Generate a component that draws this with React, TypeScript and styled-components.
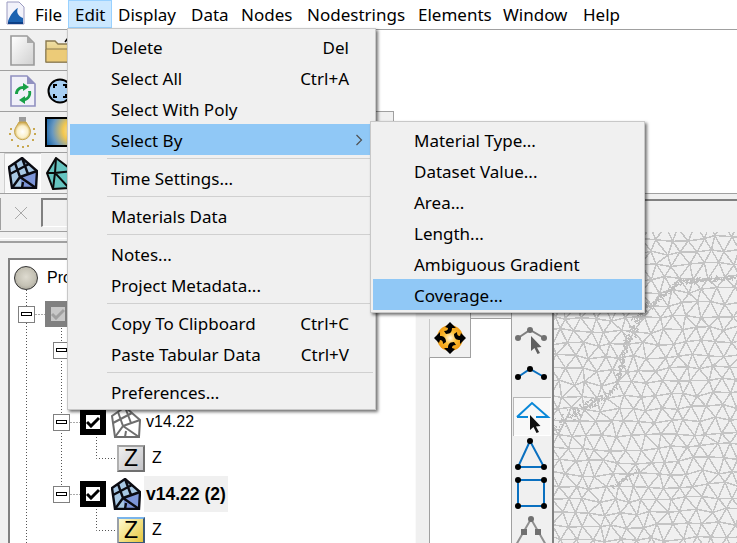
import React, { useMemo } from "react";
import styled, { createGlobalStyle } from "styled-components";

const Global = createGlobalStyle`
  html, body { margin: 0; padding: 0; background: #f0f0f0; }
  body { font-family: "Noto Sans", "Open Sans", sans-serif; color: #000; }
`;

const Page = styled.div`
  position: relative;
  width: 737px;
  height: 543px;
  overflow: hidden;
  background: #f0f0f0;
  display: flex;
  flex-direction: column;
`;

const MenuBar = styled.div`
  height: 29px;
  flex: none;
  background: #fff;
  position: relative;
  font-size: 17px;
`;
const AppIcon = styled.svg`
  position: absolute;
  left: 5px;
  top: 1px;
`;
const MenuLabel = styled.span<{ $x: number; $active?: boolean }>`
  position: absolute;
  left: ${(p) => p.$x}px;
  top: 0;
  height: 28px;
  line-height: 30px;
  white-space: nowrap;
  ${(p) =>
    p.$active
      ? `background:#cce8ff; box-shadow: inset 0 0 0 1px #99d1ff; padding: 0 7px; height: 28px;`
      : ""}
`;

const TopZone = styled.div`
  flex: none;
  background: #fff;
  border-top: 1px solid #a0a0a0;
  border-bottom: 1px solid #a0a0a0;
  display: flex;
  flex-direction: column;
  align-items: flex-start;
`;
const ToolRow = styled.div<{ $w: number; $edge?: boolean }>`
  width: ${(p) => p.$w}px;
  height: 40px;
  box-sizing: border-box;
  background: #f0f0f0;
  padding-left: 4px;
  display: flex;
  ${(p) => (p.$edge ? "border-right: 1px solid #a0a0a0;" : "")}
  & + & {
    height: 41px;
    border-top: 1px solid #a0a0a0;
  }
`;
const ToolCell = styled.div<{ $sel?: boolean }>`
  width: 37px;
  height: 100%;
  flex: none;
  display: flex;
  align-items: center;
  justify-content: center;
  box-sizing: border-box;
  ${(p) => (p.$sel ? "background:#f9f9f9; box-shadow: inset 1px 1px 0 #cfcfcf, inset -1px -1px 0 #fff;" : "")}
`;

const InputBar = styled.div`
  flex: none;
  height: 38px;
  display: flex;
`;
const InputLeft = styled.div`
  width: 376px;
  flex: none;
  box-sizing: border-box;
  height: 38px;
  border-bottom: 1px solid #a0a0a0;
  padding: 4px 0 0 0;
  display: flex;
  align-items: flex-start;
`;
const Handle = styled.div`
  width: 1px;
  height: 32px;
  background: #a0a0a0;
`;
const XBtn = styled.div`
  width: 40px;
  height: 29px;
  display: flex;
  align-items: center;
  justify-content: center;
`;
const FakeInput = styled.div`
  width: 330px;
  height: 29px;
  box-sizing: border-box;
  border-top: 2px solid #808080;
  border-left: 2px solid #808080;
  border-bottom: 1px solid #fff;
  background: #f0f0f0;
`;
const InputRight = styled.div`
  flex: 1;
  margin-top: 5px;
  border-top: 2px solid #808080;
`;

const Workspace = styled.div`
  flex: 1;
  min-height: 0;
  display: flex;
`;
const TreeArea = styled.div`
  width: 415px;
  flex: none;
  display: flex;
  flex-direction: column;
`;
const TreeRule = styled.div`
  margin-top: 6px;
  height: 2px;
  border-top: 1px solid #fff;
  border-bottom: 2px solid #a0a0a0;
  flex: none;
`;
const TreeFrame = styled.div`
  margin: 15px 0 0 8px;
  flex: 1;
  position: relative;
  background: #fff;
  border-top: 2px solid #808080;
  border-left: 2px solid #808080;
  overflow: hidden;
`;
const TreeLines = styled.svg`
  position: absolute;
  left: 0;
  top: 0;
`;
const TreeRow = styled.div<{ $indent: number }>`
  position: relative;
  height: 36px;
  padding-left: ${(p) => p.$indent}px;
  display: flex;
  align-items: center;
  font-family: "Liberation Sans", Arial, sans-serif;
  font-size: 16px;
`;
const Expander = styled.div`
  width: 17px;
  height: 17px;
  box-sizing: border-box;
  border: 1px solid #808080;
  background: #fff;
  margin-right: 10px;
  flex: none;
  display: flex;
  align-items: center;
  justify-content: center;
  &::after {
    content: "";
    width: 11px;
    height: 4px;
    box-sizing: border-box;
    border: 1px solid #000;
    background: #fff;
  }
`;
const CheckBox = styled.div<{ $off?: boolean }>`
  width: 26px;
  height: 26px;
  box-sizing: border-box;
  border: 6px solid ${(p) => (p.$off ? "#808080" : "#000")};
  background: ${(p) => (p.$off ? "#c8c8c8" : "#fff")};
  flex: none;
  display: flex;
  align-items: center;
  justify-content: center;
  margin-right: 5px;
`;
const NodeLabel = styled.span<{ $bold?: boolean }>`
  margin-left: 5px;
  white-space: nowrap;
  ${(p) =>
    p.$bold
      ? `font-weight:700; font-size:17.5px; background:#f0f0f0; height:36px; line-height:36px; padding:0 2px 0 2px; margin-left:3px; width:80px;`
      : ""}
`;
const Ball = styled.div`
  width: 24px;
  height: 24px;
  border-radius: 50%;
  box-sizing: border-box;
  border: 1px solid #333;
  background: radial-gradient(circle at 50% 45%, #dedbd0 0%, #c4c1b4 55%, #8f8c82 100%);
  margin-right: 9px;
  flex: none;
`;
const ZBox = styled.div<{ $active?: boolean }>`
  width: 28px;
  height: 27px;
  box-sizing: border-box;
  flex: none;
  display: flex;
  align-items: center;
  justify-content: center;
  font-size: 23px;
  line-height: 22px;
  font-family: "Liberation Sans", Arial, sans-serif;
  border: 2px solid;
  border-color: ${(p) =>
    p.$active ? "#7ab4ea #3c5a78 #3c5a78 #9aa0a8" : "#a0a0a0 #707070 #707070 #b0b0b0"};
  background: ${(p) =>
    p.$active ? "linear-gradient(135deg,#fffbd0,#e6c63c)" : "linear-gradient(135deg,#f0f0f0,#c4c4c8)"};
`;
const ZText = styled.span`
  margin-left: 7px;
`;

const MidArea = styled.div`
  width: 96px;
  flex: none;
  box-sizing: border-box;
  padding-left: 13px;
  border-left: 1px solid #fafafa;
  display: flex;
  flex-direction: column;
`;
const UpperTabs = styled.div`
  height: 86px;
  flex: none;
  margin-left: 41px;
  border-left: 1px solid #a0a0a0;
  border-bottom: 1px solid #a0a0a0;
`;
const ActiveRow = styled.div`
  display: flex;
  background: #fff;
  height: 39px;
  flex: none;
`;
const ActiveTab = styled.div`
  width: 42px;
  height: 39px;
  box-sizing: border-box;
  background: #f0f0f0;
  border-right: 1px solid #a0a0a0;
  border-left: 1px solid #c8c8c8;
  border-bottom: 1px solid #a0a0a0;
  display: flex;
  align-items: center;
  justify-content: center;
`;
const TabBody = styled.div`
  flex: 1;
  background: #fff;
  border-left: 1px solid #a0a0a0;
`;

const ToolColumn = styled.div`
  width: 41px;
  flex: none;
  box-sizing: border-box;
  border-left: 1px solid #a0a0a0;
  padding-top: 87px;
  display: flex;
  flex-direction: column;
  align-items: stretch;
`;
const ColumnBtn = styled.div<{ $sel?: boolean }>`
  height: 39px;
  flex: none;
  ${(p) =>
    p.$sel
      ? "background:#f8f8f8; box-shadow: inset 1px 1px 0 #b8b8b8, inset -1px -1px 0 #fff; margin: 0 1px;"
      : ""}
  svg { display: block; }
`;
const MeshView = styled.div`
  flex: 1;
  box-sizing: border-box;
  border-left: 2px solid #808080;
  background: #f0f0f0;
  overflow: hidden;
`;

const Menu = styled.div<{ $x: number; $y: number; $w: number }>`
  position: absolute;
  left: ${(p) => p.$x}px;
  top: ${(p) => p.$y}px;
  width: ${(p) => p.$w}px;
  box-sizing: border-box;
  padding: 2px;
  border: 1px solid #c8c8c8;
  background: #f0f0f0;
  box-shadow: 2px 2px 3px rgba(0, 0, 0, 0.55);
  font-size: 17px;
  z-index: 5;
`;
const Item = styled.div<{ $hot?: boolean }>`
  position: relative;
  height: 31px;
  line-height: 34px;
  padding: 0 24px 0 41px;
  display: flex;
  justify-content: space-between;
  white-space: nowrap;
  background: ${(p) => (p.$hot ? "#90c8f6" : "transparent")};
`;
const Sep = styled.div`
  height: 1px;
  margin: 3px 0 3px 37px;
  background: #d0d0d0;
`;
const Chevron = styled.svg`
  position: absolute;
  right: 10px;
  top: 10px;
`;

function seeded(s: number) {
  let x = s;
  return () => {
    x = (x * 16807) % 2147483647;
    return x / 2147483647;
  };
}

function buildMesh() {
  const r = seeded(4711);
  const rows = 27;
  const cols = 15;
  const pts: [number, number][][] = [];
  for (let j = 0; j < rows; j++) {
    const row: [number, number][] = [];
    for (let i = 0; i < cols; i++) {
      const bx = -10 + i * 15 + (j % 2 ? 7.5 : 0);
      const by = -6 + j * 13;
      const x = bx + 2 * Math.sin(by / 37) + (r() - 0.5) * 6;
      const y = by + 2 * Math.sin(bx / 41) + (r() - 0.5) * 5;
      row.push([x, y]);
    }
    pts.push(row);
  }
  let d = "";
  const seg = (a: [number, number], b: [number, number]) => {
    d += `M${a[0].toFixed(1)} ${a[1].toFixed(1)}L${b[0].toFixed(1)} ${b[1].toFixed(1)}`;
  };
  for (let j = 0; j < rows; j++) {
    for (let i = 0; i < cols; i++) {
      if (i + 1 < cols) seg(pts[j][i], pts[j][i + 1]);
      if (j + 1 < rows) {
        seg(pts[j][i], pts[j + 1][i]);
        const k = j % 2 ? i + 1 : i - 1;
        if (k >= 0 && k < cols) seg(pts[j][i], pts[j + 1][k]);
      }
    }
  }
  const river: [number, number, number][] = [
    [184, 46, 1.5], [150, 48, 2], [124, 50, 2.5], [107, 65, 2], [85, 85, 5], [76, 100, 5],
    [72, 112, 2], [68, 135, 1.5], [60, 158, 1.5], [40, 171, 4], [22, 181, 6], [8, 190, 7], [0, 194, 6],
  ];
  let dense = "";
  const add = (x: number, y: number, w: number) => {
    const a = [x + (r() - 0.5) * w * 2, y + (r() - 0.5) * w * 2];
    const b = [a[0] + (r() - 0.5) * 5, a[1] + (r() - 0.5) * 5];
    dense += `M${a[0].toFixed(1)} ${a[1].toFixed(1)}L${b[0].toFixed(1)} ${b[1].toFixed(1)}`;
  };
  for (let s = 0; s + 1 < river.length; s++) {
    const [x0, y0, w0] = river[s];
    const [x1, y1, w1] = river[s + 1];
    const n = Math.ceil(Math.hypot(x1 - x0, y1 - y0) / 0.5);
    for (let t = 0; t < n; t++) {
      const f = t / n;
      add(x0 + (x1 - x0) * f, y0 + (y1 - y0) * f, w0 + (w1 - w0) * f);
    }
  }
  for (let t = 0; t < 40; t++) {
    const f = t / 40;
    add(85 - 28 * f, 238 + 18 * f, 1.5);
  }
  return { d, dense };
}

const Mesh = () => {
  const { d, dense } = useMemo(buildMesh, []);
  return (
    <svg width="184" height="311" viewBox="0 0 184 311" style={{ display: "block" }}>
      <path d={d} stroke="#c4c4c4" strokeWidth="1.5" fill="none" shapeRendering="crispEdges" />
      <path d={dense} stroke="#bebebe" strokeWidth="1.3" fill="none" shapeRendering="crispEdges" />
    </svg>
  );
};

const LayerIcon = ({ kind }: { kind: "color" | "grey" }) => {
  const stroke = kind === "color" ? "#0b0b12" : "#6e6e6e";
  return (
    <svg width="30" height="32" viewBox="0 0 30 32">
      <polygon points="14,1 29,14 28,31 4,31 1,10" fill={kind === "color" ? "#a8c8e4" : "#fff"} />
      {kind === "color" && <polygon points="12,20 29,14 28,31 14,31" fill="#7d95d8" />}
      <g stroke={stroke} strokeWidth={kind === "color" ? 2.4 : 2} fill="none">
        <polygon points="14,1 29,14 28,31 4,31 1,10" />
        <path d="M7 6L12 20L4 31M14 1L20 17M2 17L21 7M12 20L28 31M12 20L29 14M15 25L14 31" />
      </g>
    </svg>
  );
};

const Check = ({ off }: { off?: boolean }) => (
  <svg width="14" height="12" viewBox="0 0 14 12">
    <path d="M1 6L5 10L13 2" stroke={off ? "#a0a0a0" : "#000"} strokeWidth="3" fill="none" />
  </svg>
);

const Cursor = ({ x, y, fill }: { x: number; y: number; fill: string }) => (
  <polygon
    transform={`translate(${x} ${y})`}
    points="0,0 0,15 3.5,12 6.5,18 9,17 6,11.5 10.5,11"
    fill={fill}
  />
);

const Dot = ({ x, y, fill = "#000" }: { x: number; y: number; fill?: string }) => (
  <circle cx={x} cy={y} r="3" fill={fill} />
);

const ColumnIcon = ({ children, h = 39 }: { children: React.ReactNode; h?: number }) => (
  <svg width="40" height={h} viewBox={`0 0 40 ${h}`} style={{ overflow: "visible" }}>
    {children}
  </svg>
);

export default function App() {
  return (
    <Page>
      <Global />
      <MenuBar>
        <AppIcon width="20" height="24" viewBox="0 0 20 24">
          <polygon points="2,1 14,1 19,6 19,23 2,23" fill="#f2f2fa" stroke="#9a9ac0" />
          <path d="M3 20C6 13 9 9 13 7C11 11 13 15 18 17V22H3Z" fill="#1c62b0" />
          <path d="M3 21H18V23H3Z" fill="#0d3f86" />
        </AppIcon>
        <MenuLabel $x={35}>File</MenuLabel>
        <MenuLabel $x={68} $active>Edit</MenuLabel>
        <MenuLabel $x={118}>Display</MenuLabel>
        <MenuLabel $x={191}>Data</MenuLabel>
        <MenuLabel $x={241}>Nodes</MenuLabel>
        <MenuLabel $x={307}>Nodestrings</MenuLabel>
        <MenuLabel $x={418}>Elements</MenuLabel>
        <MenuLabel $x={503}>Window</MenuLabel>
        <MenuLabel $x={583}>Help</MenuLabel>
      </MenuBar>

      <TopZone>
        <ToolRow $w={376}>
          <ToolCell>
            <svg width="25" height="31" viewBox="0 0 25 31">
              <defs>
                <linearGradient id="pg" x1="0" y1="0" x2="1" y2="1">
                  <stop offset="0" stopColor="#fff" />
                  <stop offset="1" stopColor="#d0d0d0" />
                </linearGradient>
              </defs>
              <polygon points="1,1 17,1 24,8 24,30 1,30" fill="url(#pg)" stroke="#9a9a9a" strokeWidth="1.6" />
              <polygon points="17,1 24,8 17,8" fill="#a8a8a8" />
            </svg>
          </ToolCell>
          <ToolCell>
            <svg width="30" height="26" viewBox="0 0 30 26">
              <defs>
                <linearGradient id="fg" x1="0" y1="0" x2="0" y2="1">
                  <stop offset="0" stopColor="#efe0a8" />
                  <stop offset="1" stopColor="#e0b858" />
                </linearGradient>
              </defs>
              <path d="M1 4H10L13 7H24V25H1Z" fill="url(#fg)" stroke="#8a7a50" strokeWidth="1.4" />
              <path d="M1 12H28L25 25H1Z" fill="#eccb78" stroke="#8a7a50" />
              <path d="M20 5L23 1" stroke="#000" strokeWidth="1.6" />
            </svg>
          </ToolCell>
        </ToolRow>
        <ToolRow $w={376}>
          <ToolCell>
            <svg width="26" height="32" viewBox="0 0 26 32">
              <polygon points="1,1 17,1 25,9 25,31 1,31" fill="#f0f0f8" stroke="#9090c0" strokeWidth="1.6" />
              <polygon points="17,1 25,9 17,9" fill="#9090c0" />
              <g fill="#18a048">
                <path d="M5 19C5 14 9 11 13 11V8L19 12L13 16V14C10 14 8 16 8 19Z" />
                <path d="M21 16C22 21 19 25 15 26V29L9 25L15 21V23C18 22 19 19 18 16Z" />
              </g>
            </svg>
          </ToolCell>
          <ToolCell>
            <svg width="26" height="26" viewBox="0 0 26 26">
              <circle cx="13" cy="13" r="11.5" fill="#a8d0f4" stroke="#000" strokeWidth="2" />
              <path d="M7 10V7H10M16 7H19V10M19 16V19H16M10 19H7V16" stroke="#000" strokeWidth="2" fill="none" />
            </svg>
          </ToolCell>
        </ToolRow>
        <ToolRow $w={394} $edge>
          <ToolCell>
            <svg width="27" height="31" viewBox="0 0 27 31">
              <defs>
                <radialGradient id="bulb" cx="0.5" cy="0.55" r="0.55">
                  <stop offset="0" stopColor="#fff" />
                  <stop offset="0.6" stopColor="#fbf0c8" />
                  <stop offset="1" stopColor="#c8a040" />
                </radialGradient>
              </defs>
              <rect x="10" y="0" width="7" height="5" fill="#9c9c9c" />
              <path d="M10 5H17L20 10A8 8 0 1 1 7 10Z" fill="url(#bulb)" stroke="#c8a850" />
              <g fill="#c8a850">
                <rect x="1" y="11" width="2" height="2" />
                <rect x="24" y="11" width="2" height="2" />
                <rect x="0" y="16" width="2" height="2" />
                <rect x="25" y="16" width="2" height="2" />
                <rect x="2" y="22" width="2" height="2" />
                <rect x="23" y="22" width="2" height="2" />
                <rect x="8" y="28" width="2" height="2" />
                <rect x="13" y="29" width="2" height="2" />
                <rect x="18" y="28" width="2" height="2" />
              </g>
            </svg>
          </ToolCell>
          <ToolCell>
            <svg width="30" height="30" viewBox="0 0 30 30">
              <defs>
                <radialGradient id="gs" cx="1" cy="0.45" r="1.1">
                  <stop offset="0" stopColor="#f8f0d8" />
                  <stop offset="0.35" stopColor="#f4c850" />
                  <stop offset="0.7" stopColor="#6898c0" />
                  <stop offset="1" stopColor="#1060a8" />
                </radialGradient>
              </defs>
              <rect x="1" y="1" width="28" height="28" fill="url(#gs)" stroke="#000" strokeWidth="2" />
            </svg>
          </ToolCell>
        </ToolRow>
        <ToolRow $w={376}>
          <ToolCell $sel>
            <LayerIcon kind="color" />
          </ToolCell>
          <ToolCell>
            <svg width="30" height="33" viewBox="0 0 30 33">
              <polygon points="11,1 28,14 24,31 8,32 2,16" fill="#66c4c0" stroke="#0a0a0a" strokeWidth="2" />
              <path d="M11 1L10 16L24 31M28 14L10 16L8 32M2 16H10" stroke="#0a0a0a" strokeWidth="2" fill="none" />
            </svg>
          </ToolCell>
        </ToolRow>
      </TopZone>

      <InputBar>
        <InputLeft>
          <Handle />
          <XBtn>
            <svg width="14" height="14" viewBox="0 0 14 14">
              <path d="M1 1L13 13M13 1L1 13" stroke="#a8a8a8" strokeWidth="1" />
            </svg>
          </XBtn>
          <FakeInput />
        </InputLeft>
        <InputRight />
      </InputBar>

      <Workspace>
        <TreeArea>
          <TreeRule />
          <TreeFrame>
            <TreeLines width="220" height="300" viewBox="0 0 220 300">
              <path
                d="M16.5 30V290M16.5 54.5H35M51.5 68V234M51.5 90.5H70M51.5 162.5H70M51.5 234.5H70M86.5 177V198.5H107M86.5 249V270.5H107"
                stroke="#555"
                strokeDasharray="1 2"
                fill="none"
              />
            </TreeLines>
            <TreeRow $indent={4}>
              <Ball />
              Project
            </TreeRow>
            <TreeRow $indent={8}>
              <Expander />
              <CheckBox $off>
                <Check off />
              </CheckBox>
            </TreeRow>
            <TreeRow $indent={43}>
              <Expander />
              <CheckBox />
            </TreeRow>
            <TreeRow $indent={107} />
            <TreeRow $indent={43}>
              <Expander />
              <CheckBox>
                <Check />
              </CheckBox>
              <LayerIcon kind="grey" />
              <NodeLabel>v14.22</NodeLabel>
            </TreeRow>
            <TreeRow $indent={107}>
              <ZBox>Z</ZBox>
              <ZText>Z</ZText>
            </TreeRow>
            <TreeRow $indent={43}>
              <Expander />
              <CheckBox>
                <Check />
              </CheckBox>
              <LayerIcon kind="color" />
              <NodeLabel $bold>v14.22 (2)</NodeLabel>
            </TreeRow>
            <TreeRow $indent={107}>
              <ZBox $active>Z</ZBox>
              <ZText>Z</ZText>
            </TreeRow>
          </TreeFrame>
        </TreeArea>

        <MidArea>
          <UpperTabs />
          <ActiveRow>
            <ActiveTab>
              <svg width="34" height="34" viewBox="0 0 34 34">
                <defs>
                  <radialGradient id="orb" cx="0.5" cy="0.5" r="0.5">
                    <stop offset="0" stopColor="#fff8e8" />
                    <stop offset="0.5" stopColor="#fbbc30" />
                    <stop offset="1" stopColor="#f09a10" />
                  </radialGradient>
                </defs>
                <circle cx="17" cy="17" r="13" fill="url(#orb)" />
                <g fill="#000">
                  <path d="M17 1L12 6L15 7C15 9 14 10 11 10L13 13C18 13 19 10 19 7L23 7Z" />
                  <path d="M33 17L28 12L27 15C25 15 24 14 24 11L21 13C21 18 24 19 27 19V23Z" />
                  <path d="M17 33L22 28L19 27C19 25 20 24 23 24L21 21C16 21 15 24 15 27L11 27Z" />
                  <path d="M1 17L6 22L7 19C9 19 10 20 10 23L13 21C13 16 10 15 7 15V11Z" />
                </g>
              </svg>
            </ActiveTab>
          </ActiveRow>
          <TabBody />
        </MidArea>

        <ToolColumn>
          <ColumnBtn>
            <ColumnIcon>
              <path d="M6 19L18 11L32 19" stroke="#808080" strokeWidth="2" fill="none" />
              <Dot x={6} y={19} fill="#707070" />
              <Dot x={18} y={11} fill="#707070" />
              <Dot x={32} y={19} fill="#707070" />
              <Cursor x={19} y={17} fill="#606060" />
            </ColumnIcon>
          </ColumnBtn>
          <ColumnBtn>
            <ColumnIcon>
              <path d="M6 19L18 11L32 19" stroke="#0a70c0" strokeWidth="2" fill="none" />
              <Dot x={6} y={19} />
              <Dot x={18} y={11} />
              <Dot x={32} y={19} />
            </ColumnIcon>
          </ColumnBtn>
          <ColumnBtn $sel>
            <ColumnIcon>
              <path d="M4 20H15M23 20H35L19 6L4 20" stroke="#0a88d8" strokeWidth="2" fill="none" />
              <Cursor x={17} y={18} fill="#101010" />
            </ColumnIcon>
          </ColumnBtn>
          <ColumnBtn>
            <ColumnIcon>
              <polygon points="18,5 6,31 32,31" stroke="#0a70c0" strokeWidth="2" fill="none" />
              <Dot x={18} y={5} />
              <Dot x={6} y={31} />
              <Dot x={32} y={31} />
            </ColumnIcon>
          </ColumnBtn>
          <ColumnBtn>
            <ColumnIcon>
              <rect x="6" y="5" width="26" height="26" stroke="#0a70c0" strokeWidth="2" fill="none" />
              <Dot x={6} y={5} />
              <Dot x={32} y={5} />
              <Dot x={6} y={31} />
              <Dot x={32} y={31} />
            </ColumnIcon>
          </ColumnBtn>
          <ColumnBtn>
            <ColumnIcon>
              <path d="M19 5L4 31M19 5L34 31" stroke="#909090" strokeWidth="2" fill="none" />
              <Dot x={19} y={5} fill="#707070" />
              <rect x="9" y="15" width="6" height="6" fill="#707070" />
              <rect x="23" y="15" width="6" height="6" fill="#707070" />
            </ColumnIcon>
          </ColumnBtn>
        </ToolColumn>

        <MeshView>
          <Mesh />
        </MeshView>
      </Workspace>

      <Menu $x={67} $y={28} $w={309}>
        <Item>Delete<span>Del</span></Item>
        <Item>Select All<span>Ctrl+A</span></Item>
        <Item>Select With Poly</Item>
        <Item $hot>
          Select By
          <Chevron width="8" height="12" viewBox="0 0 8 12">
            <path d="M1.5 1L6.5 6L1.5 11" stroke="#505050" strokeWidth="1.2" fill="none" />
          </Chevron>
        </Item>
        <Sep />
        <Item>Time Settings...</Item>
        <Sep />
        <Item>Materials Data</Item>
        <Sep />
        <Item>Notes...</Item>
        <Item>Project Metadata...</Item>
        <Sep />
        <Item>Copy To Clipboard<span>Ctrl+C</span></Item>
        <Item>Paste Tabular Data<span>Ctrl+V</span></Item>
        <Sep />
        <Item>Preferences...</Item>
      </Menu>

      <Menu $x={370} $y={121} $w={275}>
        <Item>Material Type...</Item>
        <Item>Dataset Value...</Item>
        <Item>Area...</Item>
        <Item>Length...</Item>
        <Item>Ambiguous Gradient</Item>
        <Item $hot>Coverage...</Item>
      </Menu>
    </Page>
  );
}
